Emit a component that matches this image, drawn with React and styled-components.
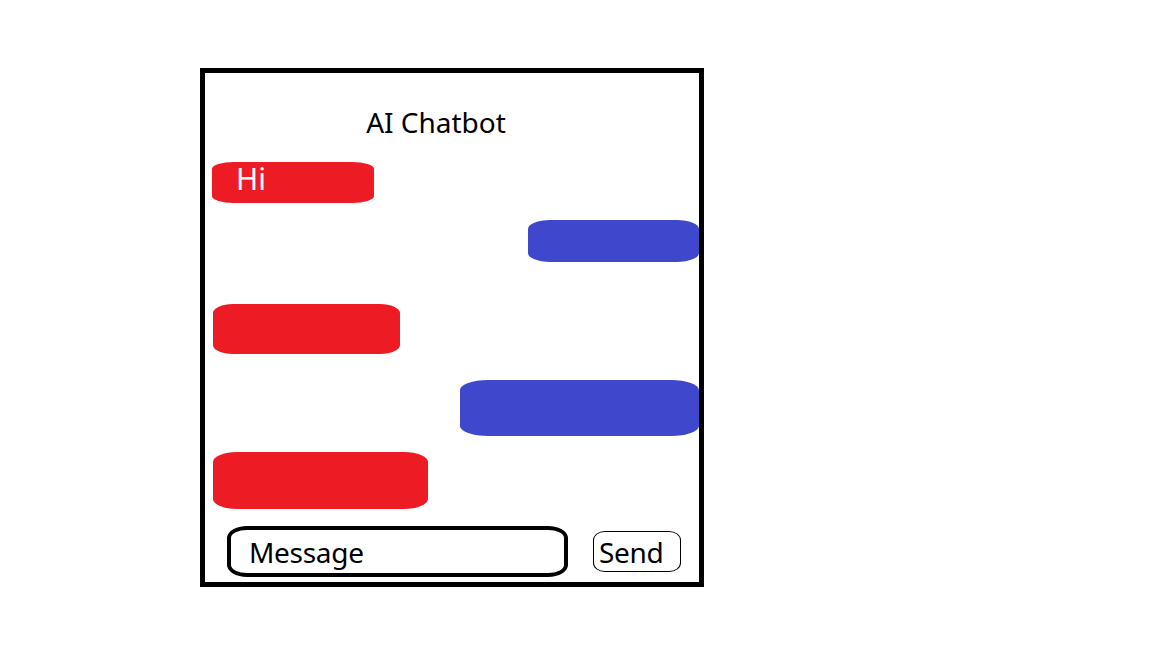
import styled, { createGlobalStyle } from 'styled-components';

const GlobalStyle = createGlobalStyle`
  html, body {
    margin: 0;
    padding: 0;
    background: #ffffff;
  }
  body {
    font-family: "Noto Sans", "Open Sans", "Liberation Sans", sans-serif;
  }
`;

// hand drawn bubbles: each has its own size and spacing
const messages = [
  { side: 'left', text: 'Hi', w: 162, h: 41, mt: 26, r: '22px / 7px', ml: 7 },
  { side: 'right', w: 171, h: 42, mt: 17, r: '22px / 9px' },
  { side: 'left', w: 187, h: 50, mt: 42, r: '20px / 9px', ml: 8 },
  { side: 'right', w: 239, h: 56, mt: 26, r: '28px / 10px' },
  { side: 'left', w: 215, h: 57, mt: 16, r: '24px / 10px', ml: 8 },
];

function App() {
  return (
    <>
      <GlobalStyle />
      <Page>
        <ChatWindow>
          <Title>AI Chatbot</Title>
          {messages.map((m, i) => (
            <Bubble
              key={i}
              $side={m.side}
              $w={m.w}
              $h={m.h}
              $mt={m.mt}
              $r={m.r}
              $ml={m.ml}
            >
              {m.text}
            </Bubble>
          ))}
          <InputRow>
            <MessageInput>Message</MessageInput>
            <SendButton>Send</SendButton>
          </InputRow>
        </ChatWindow>
      </Page>
    </>
  );
}

export default App;

const Page = styled.div`
  width: 1152px;
  height: 648px;
  box-sizing: border-box;
  padding: 68px 0 0 200px;
  background: #ffffff;
`;

const ChatWindow = styled.div`
  width: 504px;
  height: 519px;
  box-sizing: border-box;
  border: 5px solid #000000;
  display: flex;
  flex-direction: column;
`;

const Title = styled.div`
  margin-top: 35px;
  height: 28px;
  line-height: 28px;
  font-size: 28px;
  color: #000000;
  text-align: center;
  padding-right: 32px;
`;

const Bubble = styled.div`
  box-sizing: border-box;
  width: ${(p) => p.$w}px;
  height: ${(p) => p.$h}px;
  margin-top: ${(p) => p.$mt}px;
  border-radius: ${(p) => p.$r};
  background: ${(p) => (p.$side === 'left' ? '#ED1C24' : '#3F48CC')};
  align-self: ${(p) => (p.$side === 'left' ? 'flex-start' : 'flex-end')};
  margin-left: ${(p) => (p.$side === 'left' ? `${p.$ml}px` : '0')};
  color: #ffffff;
  font-size: 30px;
  line-height: 30px;
  padding: 2px 0 0 24px;
`;

const InputRow = styled.div`
  margin-top: 17px;
  height: 51px;
  display: flex;
  align-items: center;
  padding-left: 22px;
`;

const MessageInput = styled.div`
  box-sizing: border-box;
  width: 341px;
  height: 51px;
  border: 4px solid #000000;
  border-radius: 20px / 12px;
  display: flex;
  align-items: center;
  padding-left: 18px;
  font-size: 28px;
  letter-spacing: -0.3px;
  color: #000000;
`;

const SendButton = styled.div`
  box-sizing: border-box;
  margin-left: 25px;
  width: 88px;
  height: 41px;
  border: 1px solid #000000;
  border-radius: 12px / 9px;
  display: flex;
  align-items: center;
  padding-left: 5px;
  font-size: 28px;
  letter-spacing: -0.3px;
  color: #000000;
`;
